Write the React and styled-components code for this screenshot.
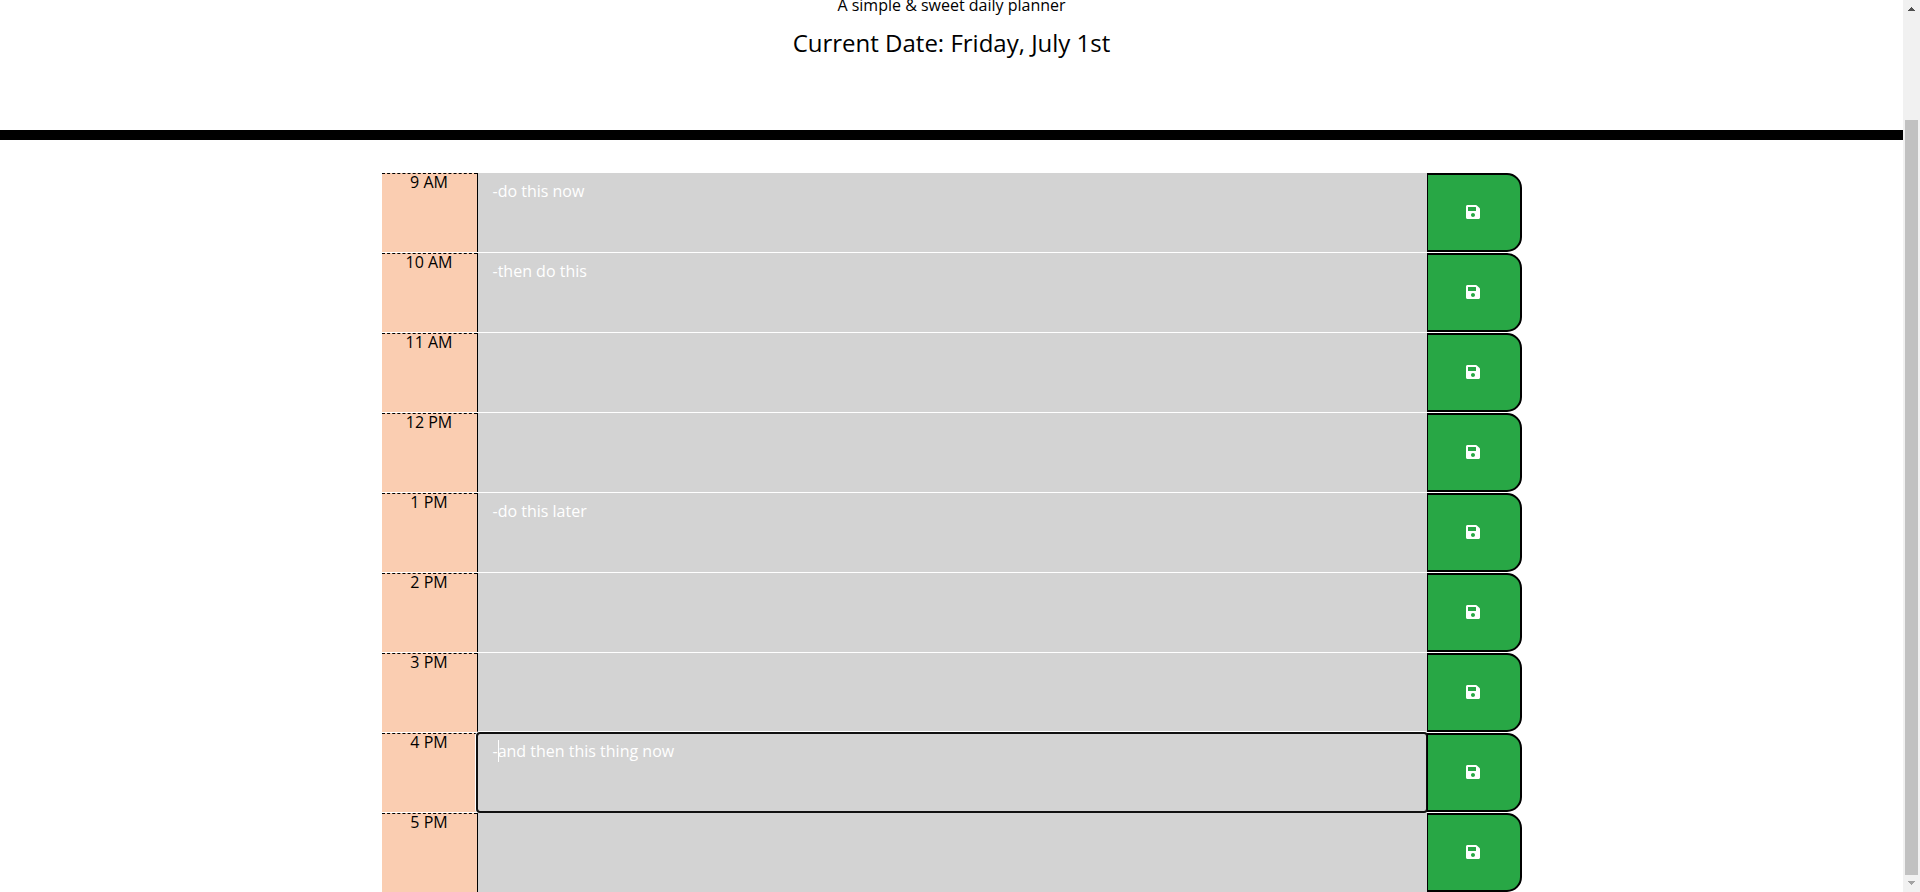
import React from "react";
import styled, { createGlobalStyle, css } from "styled-components";
import { FaSave } from "react-icons/fa";

const GlobalStyle = createGlobalStyle`
  *, *::before, *::after { box-sizing: border-box; }
  body {
    margin: 0;
    background: #fff;
    color: #000;
    font-family: "Open Sans", "Noto Sans", sans-serif;
    font-size: 16px;
    line-height: 24px;
  }
`;

const Window = styled.div`
  display: flex;
  height: 100vh;
  overflow: hidden;
`;

const Page = styled.div`
  flex: 1;
  min-width: 0;
  overflow: hidden;
`;

const Header = styled.header`
  margin-top: -7px;
  padding-bottom: 69px;
  border-bottom: 10px solid #000;
  text-align: center;
`;

const Lead = styled.p`
  margin: 0;
`;

const CurrentDate = styled.p`
  margin: 8px 0 0;
  font-size: 24px;
  line-height: 36px;
`;

const Planner = styled.main`
  max-width: 1140px;
  margin: 33px auto 0;
`;

const TimeBlock = styled.form`
  display: grid;
  grid-template-columns: 1fr 10fr 1fr;
  height: 79px;
  margin-bottom: 1px;
`;

const Hour = styled.label`
  border-top: 1px dashed #000;
  background: #facdb1;
  line-height: 16px;
  text-align: center;
`;

const Entry = styled.div`
  position: relative;
  display: flex;
`;

const Task = styled.textarea`
  flex: 1;
  min-width: 0;
  margin: 0;
  padding: 6px 15px;
  border: 0;
  border-left: 1px solid #000;
  border-radius: 0;
  outline: 0;
  background: #d3d3d3;
  color: #fff;
  font: inherit;
  overflow: hidden;
  resize: none;
  ${(p) =>
    p.$active &&
    css`
      border-radius: 3px;
      outline: 2px solid #101010;
      outline-offset: -1px;
      box-shadow: 0 0 0 2px #fff;
    `}
`;

const Caret = styled.span`
  position: absolute;
  top: 7px;
  left: 21px;
  width: 1px;
  height: 22px;
  background: #fff;
`;

const SaveButton = styled.button`
  position: relative;
  display: flex;
  align-items: center;
  justify-content: center;
  padding: 0 1px 2px 0;
  border: 2px solid #000;
  border-left-width: 1px;
  border-radius: 0 15px 15px 0;
  background: #28a745;
  color: #fff;
  font-size: 16px;
  cursor: pointer;
`;

const Scrollbar = styled.div`
  display: flex;
  flex-direction: column;
  align-items: center;
  width: 17px;
  background: #f1f1f1;
`;

const Arrow = styled.svg`
  flex: none;
  width: 17px;
  height: 17px;
  fill: ${(p) => p.$color};
`;

const Track = styled.div`
  display: flex;
  flex: 1;
  align-items: flex-end;
`;

const Thumb = styled.div`
  width: 13px;
  height: 88%;
  background: #c1c1c1;
`;

const blocks = [
  { hour: "9 AM", task: "-do this now" },
  { hour: "10 AM", task: "-then do this" },
  { hour: "11 AM", task: "" },
  { hour: "12 PM", task: "" },
  { hour: "1 PM", task: "-do this later" },
  { hour: "2 PM", task: "" },
  { hour: "3 PM", task: "" },
  { hour: "4 PM", task: "-and then this thing now", active: true },
  { hour: "5 PM", task: "" },
];

export default function App() {
  return (
    <Window>
      <GlobalStyle />
      <Page>
        <Header>
          <Lead>A simple &amp; sweet daily planner</Lead>
          <CurrentDate>Current Date: Friday, July 1st</CurrentDate>
        </Header>
        <Planner>
          {blocks.map(({ hour, task, active }, i) => (
            <TimeBlock key={hour} onSubmit={(e) => e.preventDefault()}>
              <Hour htmlFor={`task-${i}`}>{hour}</Hour>
              <Entry>
                <Task id={`task-${i}`} defaultValue={task} $active={active} spellCheck={false} />
                {active && <Caret />}
              </Entry>
              <SaveButton type="submit" aria-label={`Save ${hour}`}>
                <FaSave />
              </SaveButton>
            </TimeBlock>
          ))}
        </Planner>
      </Page>
      <Scrollbar aria-hidden="true">
        <Arrow $color="#505050" viewBox="0 0 17 17" shapeRendering="crispEdges">
          <path d="M8 7h1v1h1v1h1v1h1v1H5v-1h1V9h1V8h1z" />
        </Arrow>
        <Track>
          <Thumb />
        </Track>
        <Arrow $color="#a3a3a3" viewBox="0 0 17 17" shapeRendering="crispEdges">
          <path d="M5 6h7v1h-1v1h-1v1H9v1H8V9H7V8H6V7H5z" />
        </Arrow>
      </Scrollbar>
    </Window>
  );
}
